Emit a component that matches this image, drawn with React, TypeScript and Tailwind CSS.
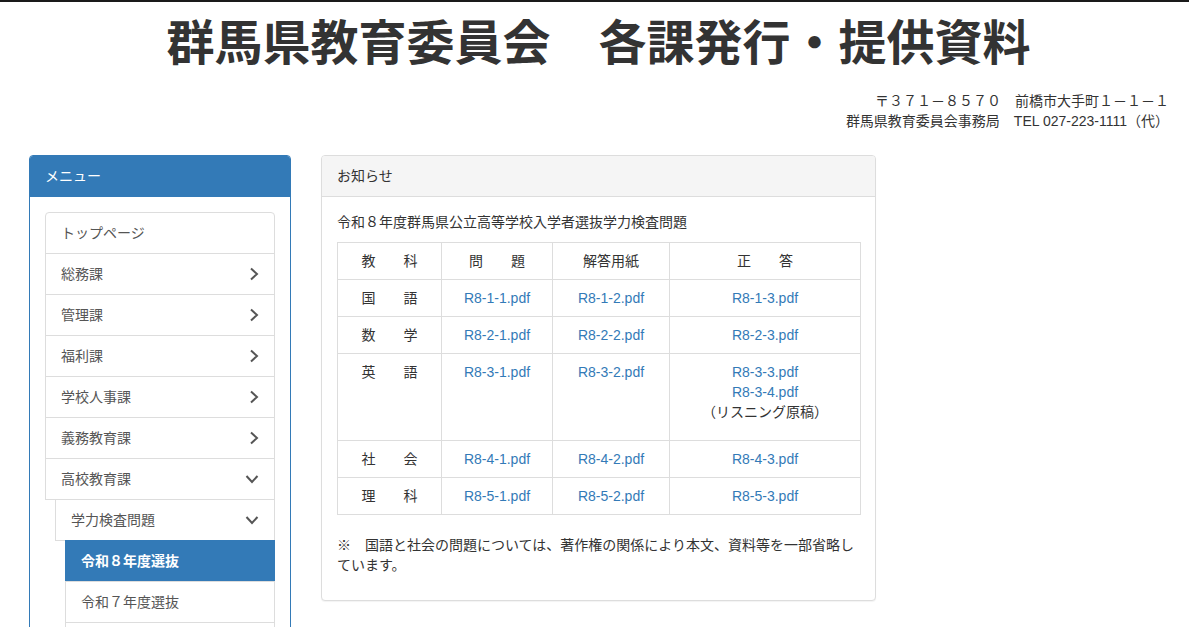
import React from 'react'

const font = { fontFamily: '"Liberation Sans", "Noto Sans CJK JP", sans-serif' }

function ChevronRight() {
  return (
    <svg width="10" height="14" viewBox="0 0 10 14" className="shrink-0">
      <polyline points="2,1.5 8,7 2,12.5" fill="none" stroke="#555" strokeWidth="2" />
    </svg>
  )
}

function ChevronDown() {
  return (
    <svg width="14" height="10" viewBox="0 0 14 10" className="shrink-0">
      <polyline points="1.5,2 7,8 12.5,2" fill="none" stroke="#555" strokeWidth="2" />
    </svg>
  )
}

const menuItems = ['総務課', '管理課', '福利課', '学校人事課', '義務教育課']

const rows = [
  { subject: '国　　語', q: 'R8-1-1.pdf', a: 'R8-1-2.pdf', ans: ['R8-1-3.pdf'] },
  { subject: '数　　学', q: 'R8-2-1.pdf', a: 'R8-2-2.pdf', ans: ['R8-2-3.pdf'] },
  { subject: '英　　語', q: 'R8-3-1.pdf', a: 'R8-3-2.pdf', ans: ['R8-3-3.pdf', 'R8-3-4.pdf'], note: '（リスニング原稿）' },
  { subject: '社　　会', q: 'R8-4-1.pdf', a: 'R8-4-2.pdf', ans: ['R8-4-3.pdf'] },
  { subject: '理　　科', q: 'R8-5-1.pdf', a: 'R8-5-2.pdf', ans: ['R8-5-3.pdf'] },
]

export default function App() {
  return (
    <div className="min-h-screen bg-white text-[#333] text-[14px] leading-[20px] border-t-2 border-[#1a1a1a]" style={font}>
      <h1 className="pl-[8px] text-center text-[48px] leading-[56px] font-bold text-[#333] mt-[14px]">
        群馬県教育委員会　各課発行・提供資料
      </h1>
      <div className="mt-[19px] pr-[20px] text-right">
        <p>〒３７１－８５７０　前橋市大手町１－１－１</p>
        <p>群馬県教育委員会事務局　TEL 027-223-1111（代）</p>
      </div>

      <div className="flex items-start gap-[30px] pl-[29px] mt-[24px]">
        {/* menu */}
        <aside className="w-[262px] shrink-0 rounded-[4px] border border-[#337ab7] bg-white">
          <div className="bg-[#337ab7] px-[15px] py-[10px] text-white rounded-t-[3px] border-b border-[#337ab7]">
            メニュー
          </div>
          <div className="p-[15px]">
            <div className="flex flex-col">
              <a className="block rounded-t-[4px] border border-[#ddd] px-[15px] py-[10px] text-[#555]">
                トップページ
              </a>
              {menuItems.map((m) => (
                <a key={m} className="-mt-px flex items-center justify-between border border-[#ddd] px-[15px] py-[10px] text-[#555]">
                  <span>{m}</span>
                  <ChevronRight />
                </a>
              ))}
              <a className="-mt-px flex items-center justify-between border border-[#ddd] px-[15px] py-[10px] text-[#555]">
                <span>高校教育課</span>
                <ChevronDown />
              </a>
              <a className="-mt-px ml-[10px] flex items-center justify-between border border-[#ddd] px-[15px] py-[10px] text-[#555]">
                <span>学力検査問題</span>
                <ChevronDown />
              </a>
              <a className="-mt-px ml-[20px] block border border-[#337ab7] bg-[#337ab7] px-[15px] py-[10px] font-bold text-white">
                令和８年度選抜
              </a>
              {['令和７年度選抜', '令和６年度選抜', '令和５年度選抜'].map((y) => (
                <a key={y} className="-mt-px ml-[20px] block border border-[#ddd] px-[15px] py-[10px] text-[#555]">
                  {y}
                </a>
              ))}
            </div>
          </div>
        </aside>

        {/* main */}
        <section className="w-[555px] shrink-0 rounded-[4px] border border-[#ddd] bg-white shadow-[0_1px_1px_rgba(0,0,0,0.05)]">
          <div className="rounded-t-[3px] border-b border-[#ddd] bg-[#f5f5f5] px-[15px] py-[10px]">お知らせ</div>
          <div className="p-[15px]">
            <p className="mb-[10px]">令和８年度群馬県公立高等学校入学者選抜学力検査問題</p>
            <table className="mb-[20px] w-[523px] table-fixed border-collapse">
              <colgroup>
                <col className="w-[104px]" />
                <col className="w-[111px]" />
                <col className="w-[117px]" />
                <col className="w-[191px]" />
              </colgroup>
              <thead>
                <tr className="h-[37px]">
                  {['教　　科', '問　　題', '解答用紙', '正　　答'].map((h) => (
                    <th key={h} className="border border-[#ddd] px-[8px] py-[8px] text-center font-normal">
                      {h}
                    </th>
                  ))}
                </tr>
              </thead>
              <tbody>
                {rows.map((r) => (
                  <tr key={r.subject} className={r.note ? 'h-[87px]' : 'h-[37px]'}>
                    <td className="border border-[#ddd] px-[8px] py-[8px] text-center align-top">{r.subject}</td>
                    <td className="border border-[#ddd] px-[8px] py-[8px] text-center align-top">
                      <a className="text-[#337ab7]">{r.q}</a>
                    </td>
                    <td className="border border-[#ddd] px-[8px] py-[8px] text-center align-top">
                      <a className="text-[#337ab7]">{r.a}</a>
                    </td>
                    <td className="border border-[#ddd] px-[8px] py-[8px] text-center align-top">
                      {r.ans.map((x) => (
                        <a key={x} className="block text-[#337ab7]">
                          {x}
                        </a>
                      ))}
                      {r.note && <div>{r.note}</div>}
                    </td>
                  </tr>
                ))}
              </tbody>
            </table>
            <p className="mb-[10px]">
              ※　国語と社会の問題については、著作権の関係により本文、資料等を一部省略しています。
            </p>
          </div>
        </section>
      </div>
    </div>
  )
}
